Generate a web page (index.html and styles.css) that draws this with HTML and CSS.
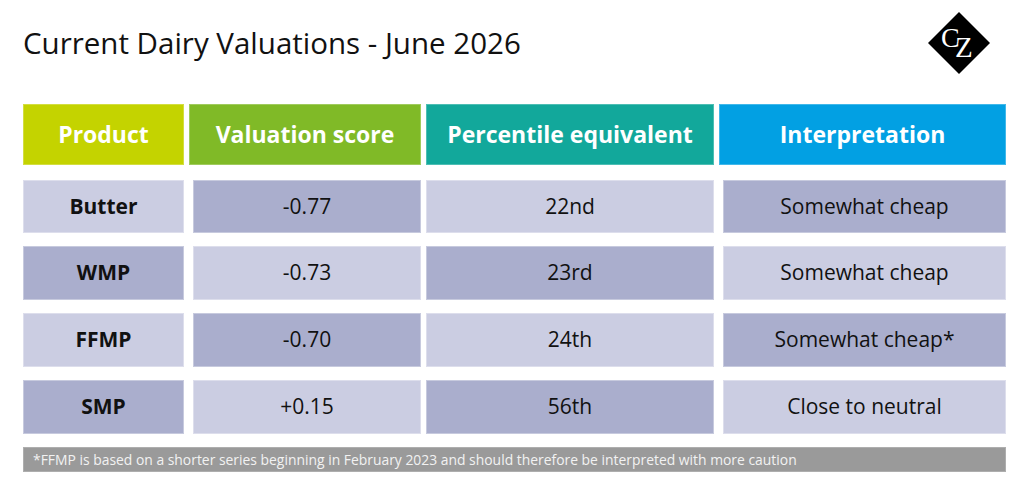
FILE: index.html
```html
<!DOCTYPE html>
<html lang="en">
<head>
<meta charset="utf-8">
<title>Current Dairy Valuations - June 2026</title>
<link rel="stylesheet" href="styles.css">
</head>
<body>
<div class="page">
  <header class="top">
    <h1 class="title">Current Dairy Valuations - June 2026</h1>
    <svg class="logo" width="64" height="64" viewBox="0 0 64 64" aria-label="CZ logo">
      <polygon points="32,1 63,32 32,63 1,32" fill="#000"/>
      <text class="logo-text"><tspan x="14" y="36" class="logo-c">C</tspan><tspan x="28" y="46" class="logo-z">Z</tspan></text>
    </svg>
  </header>

  <div class="table">
    <div class="hcell h1">Product</div>
    <div class="hcell h2">Valuation score</div>
    <div class="hcell h3">Percentile equivalent</div>
    <div class="hcell h4">Interpretation</div>

    <div class="cell light prod">Butter</div>
    <div class="cell dark shift">-0.77</div>
    <div class="cell light">22nd</div>
    <div class="cell dark shift">Somewhat cheap</div>

    <div class="cell dark prod">WMP</div>
    <div class="cell light shift">-0.73</div>
    <div class="cell dark">23rd</div>
    <div class="cell light shift">Somewhat cheap</div>

    <div class="cell light prod">FFMP</div>
    <div class="cell dark shift">-0.70</div>
    <div class="cell light">24th</div>
    <div class="cell dark shift">Somewhat cheap*</div>

    <div class="cell dark prod">SMP</div>
    <div class="cell light shift">+0.15</div>
    <div class="cell dark">56th</div>
    <div class="cell light shift">Close to neutral</div>

    <div class="note">*FFMP is based on a shorter series beginning in February 2023 and should therefore be interpreted with more caution</div>
  </div>
</div>
</body>
</html>
```

FILE: styles.css
```css
html, body {
  margin: 0;
  padding: 0;
  background: #ffffff;
}

body {
  font-family: "Open Sans", "Liberation Sans", sans-serif;
  color: #111111;
}

.page {
  width: 1034px;
  height: 498px;
  box-sizing: border-box;
  padding: 11px 0 0 23px;
}

.top {
  display: flex;
  justify-content: space-between;
  align-items: flex-start;
  width: 968px;
  height: 93px;
}

.title {
  margin: 13px 0 0 0;
  font-size: 29.5px;
  font-weight: 400;
  line-height: 38px;
  color: #111111;
  letter-spacing: 0;
}

.logo {
  display: block;
  margin-top: 0;
}

.logo-text {
  font-family: "Liberation Serif", "DejaVu Serif", serif;
  fill: #ffffff;
}

.logo-c {
  font-size: 28px;
}

.logo-z {
  font-size: 29px;
}

.table {
  display: grid;
  grid-template-columns: 161px 232px 288px 287px;
  grid-template-rows: 62px 54px 54px 54px 54px 25px;
  column-gap: 5px;
  row-gap: 13px;
}

.hcell {
  display: flex;
  align-items: center;
  justify-content: center;
  color: #ffffff;
  font-weight: 700;
  font-size: 23px;
  box-shadow: inset 0 0 0 1px rgba(255, 255, 255, 0.25);
  margin-bottom: 1px;
  padding-bottom: 1px;
}

.h1 { background: #c4d300; }
.h2 { background: #80ba27; }
.h3 { background: #12a89b; }
.h4 { background: #02a0e3; }

.cell {
  display: flex;
  align-items: center;
  justify-content: center;
  font-size: 21px;
  color: #111111;
  padding-bottom: 2px;
  box-shadow: inset 0 0 0 1px rgba(255, 255, 255, 0.35);
}

.prod {
  font-weight: 700;
}

.shift {
  margin-left: 4px;
}

.light { background: #cbcde2; }
.dark { background: #aaaecd; }

.table > .cell:nth-child(-n+8) {
  margin-top: 1px;
}

.note {
  grid-column: 1 / -1;
  background: #9a9a9a;
  color: #f2f2f2;
  font-size: 13.9px;
  line-height: 25px;
  padding-left: 10px;
  white-space: nowrap;
  box-shadow: inset 0 0 0 1px rgba(255, 255, 255, 0.2);
}
```
